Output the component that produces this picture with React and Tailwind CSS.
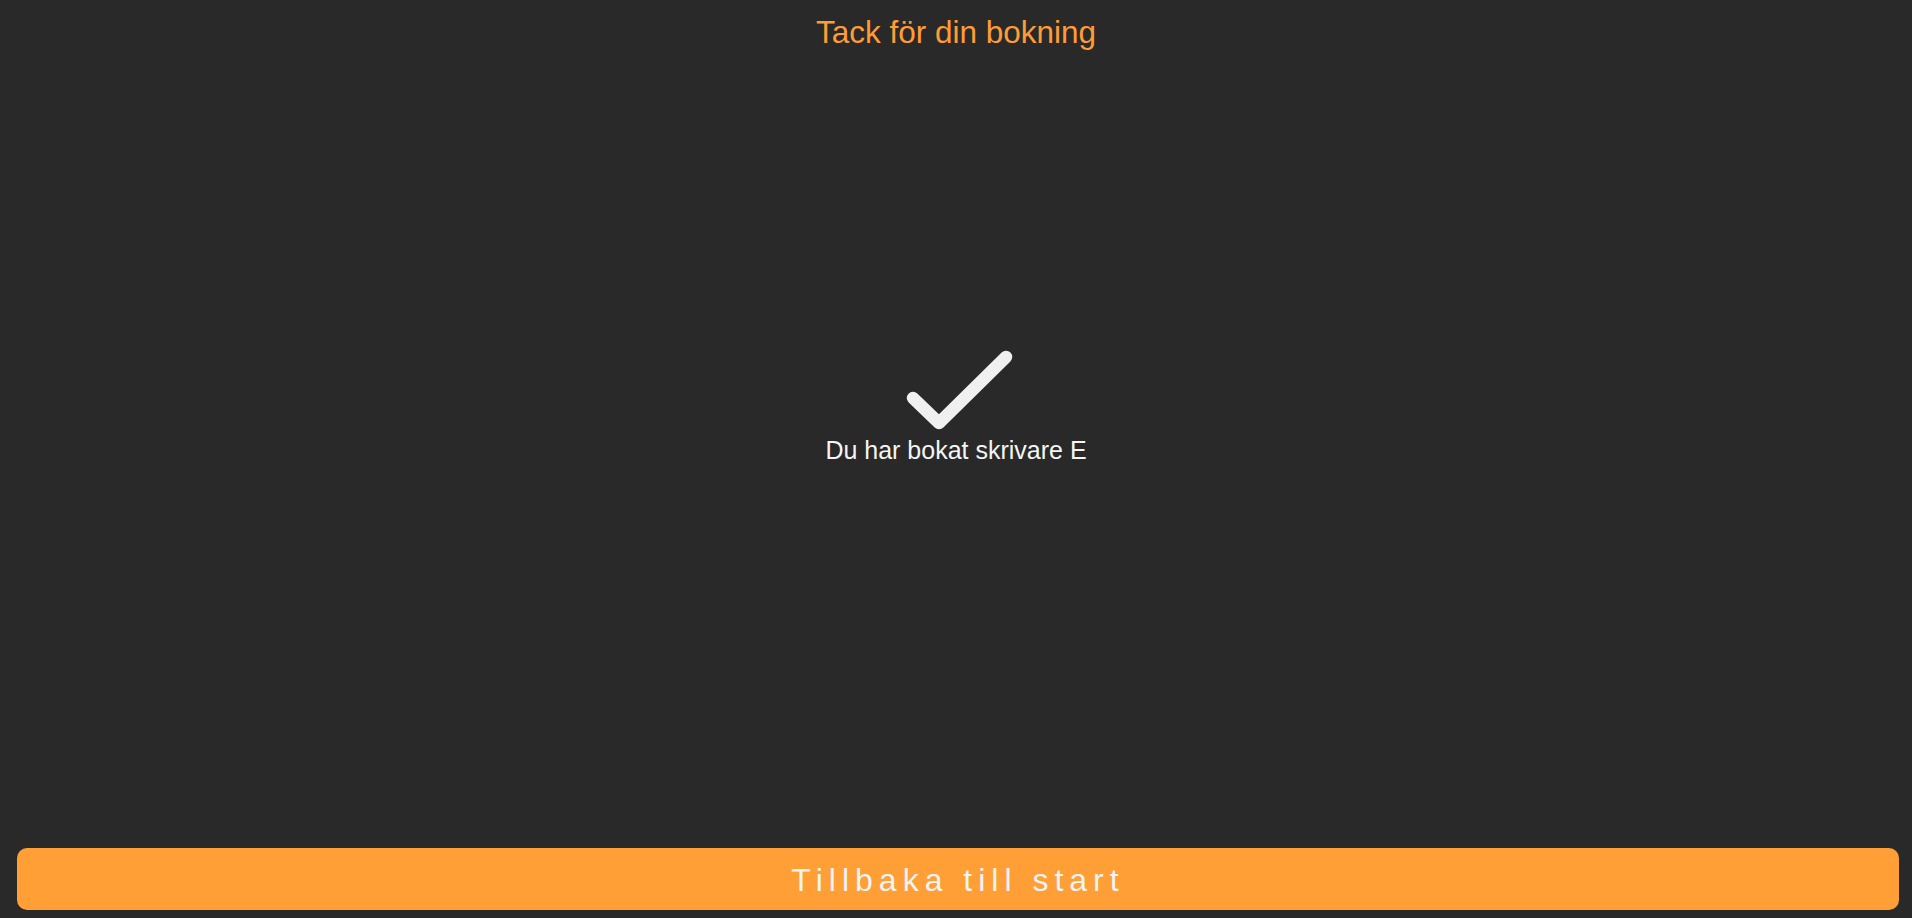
const CheckMark = () => (
  <svg width="120" height="90" viewBox="0 0 120 90" fill="none" className="block">
    <polyline
      points="17,53 43,78 110,12"
      stroke="#f0f0f0"
      strokeWidth="12.5"
      strokeLinecap="round"
      strokeLinejoin="round"
    />
  </svg>
);

const App = () => {
  return (
    <div className="w-full h-screen bg-[#292929] flex flex-col font-['Liberation_Sans',Arial,sans-serif]">
      {/* Header */}
      <h1 className="pt-[14px] text-center text-[31.5px] leading-[36px] font-normal text-[#ff9d35]">
        Tack för din bokning
      </h1>

      {/* Confirmation */}
      <div className="flex flex-col items-center pt-[295px]">
        <CheckMark />
        <p className="mt-[1px] text-[25px] leading-[29px] text-[#f5f5f5]">Du har bokat skrivare E</p>
      </div>

      {/* Back button */}
      <button className="mt-auto mb-[8px] ml-[17px] mr-[13px] h-[62px] rounded-[10px] bg-[#ff9f36] text-[32px] tracking-[6px] text-[#f3f3f3] pt-[2px]">
        Tillbaka till start
      </button>
    </div>
  );
};

export default App;
